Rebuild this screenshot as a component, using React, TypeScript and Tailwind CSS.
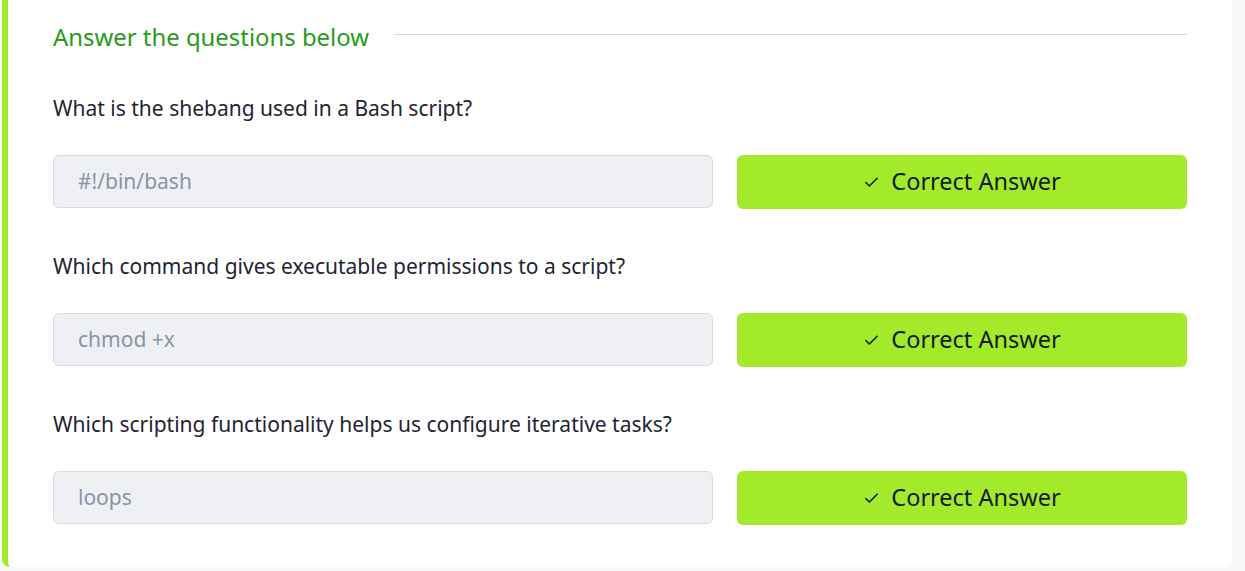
import { Check } from 'lucide-react';

const questions = [
  { q: 'What is the shebang used in a Bash script?', a: '#!/bin/bash' },
  { q: 'Which command gives executable permissions to a script?', a: 'chmod +x' },
  { q: 'Which scripting functionality helps us configure iterative tasks?', a: 'loops' },
];

export default function App() {
  return (
    <div className="h-[571px] w-[1245px] overflow-hidden bg-[#f8f9fb] pl-[2px]">
      <div
        className="h-[567px] w-[1230px] rounded-bl-[8px] rounded-br-[8px] border-l-[6px] border-[#a3ea2a] bg-white pl-[45px] pr-[45px] pt-[20px]"
        style={{ fontFamily: '"Noto Sans", sans-serif' }}
      >
        <div className="flex items-center gap-[25px]">
          <h3 className="text-[23.9px] leading-[34px] text-[#2a9a1c]">Answer the questions below</h3>
          <div className="mt-[-5px] h-[1px] flex-1 bg-[#d3d8df]" />
        </div>

        <div className="mt-[39px] flex flex-col">
          {questions.map((item) => (
            <div key={item.q} className="mb-[42px] flex flex-col">
              <p className="text-[21px] leading-[30px] text-[#1f2433]">{item.q}</p>
              <div className="mt-[32px] flex items-start gap-[24px]">
                <div className="flex h-[53px] w-[660px] items-center rounded-[6px] border border-[#d6dae1] bg-[#eef0f3] px-[24px] text-[21px] text-[#8a94a6]">
                  {item.a}
                </div>
                <button className="flex h-[54px] flex-1 items-center justify-center gap-[11px] rounded-[6px] bg-[#a3ea2a] text-[23.5px] text-[#161b29]">
                  <Check className="size-[17px]" strokeWidth={2.2} />
                  Correct Answer
                </button>
              </div>
            </div>
          ))}
        </div>
      </div>
    </div>
  );
}
